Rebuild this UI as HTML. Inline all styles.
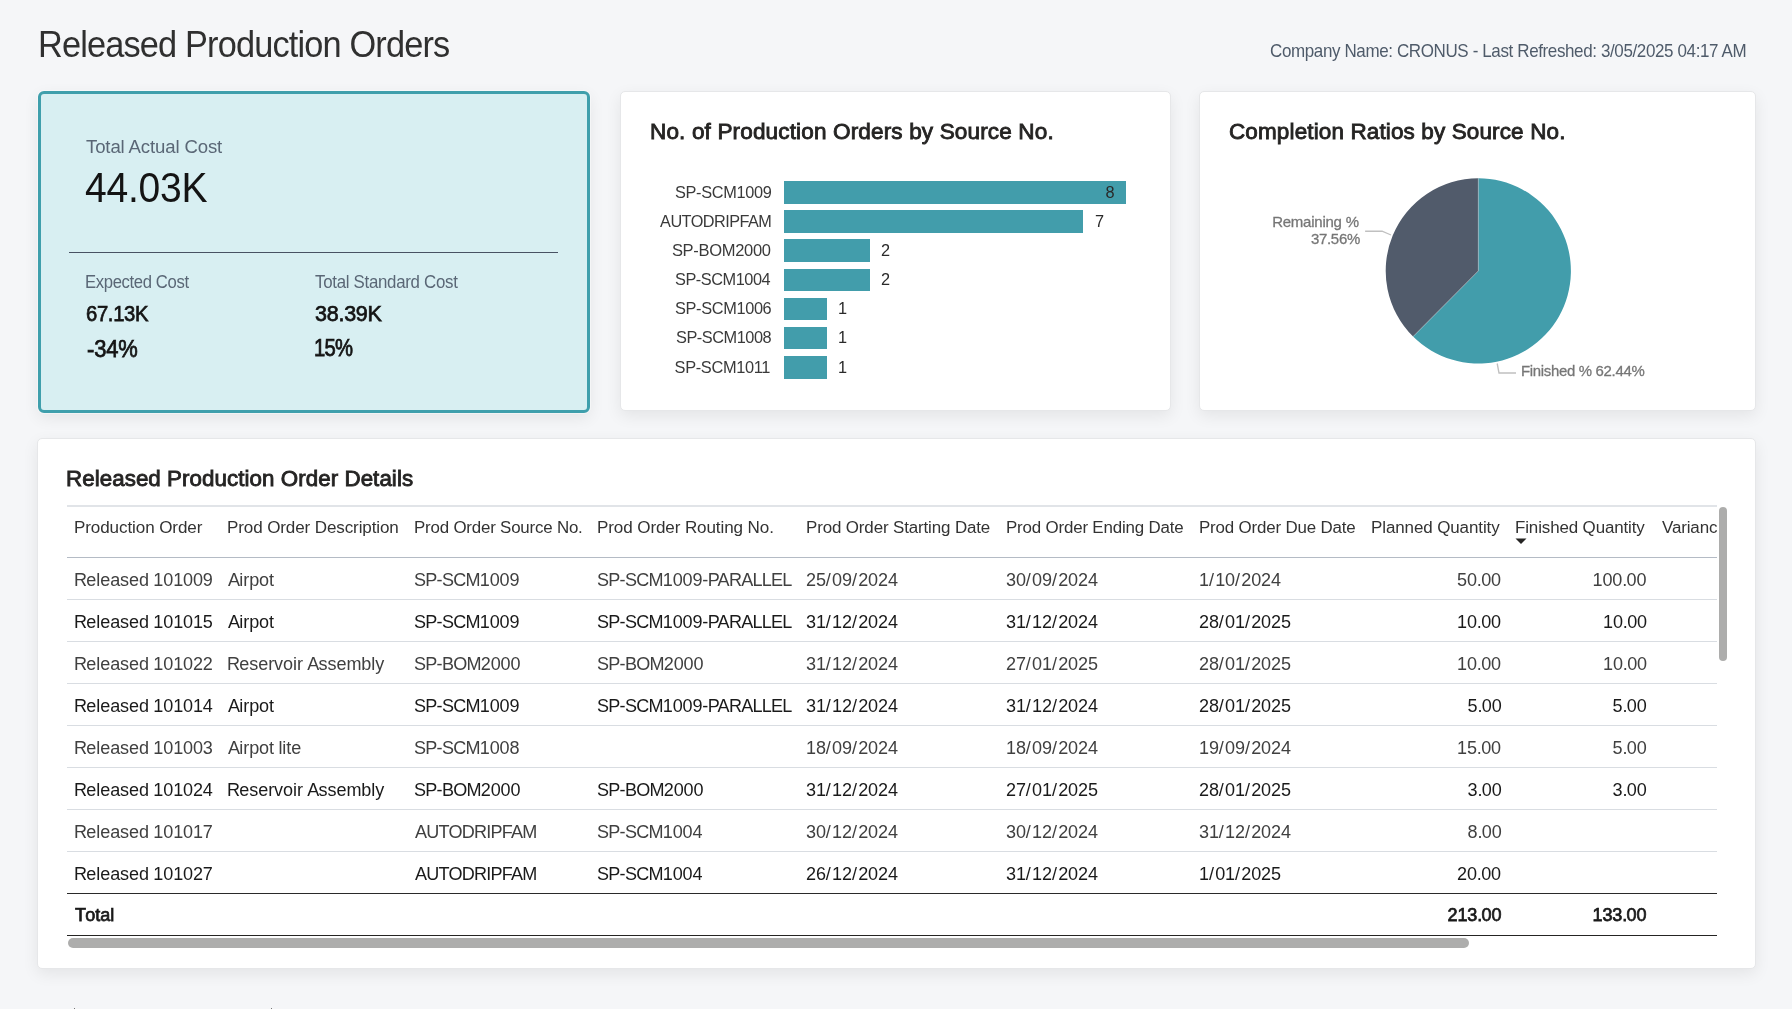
<!DOCTYPE html>
<html><head><meta charset="utf-8"><title>Released Production Orders</title><style>
*{margin:0;padding:0;box-sizing:border-box}
html,body{width:1792px;height:1009px;overflow:hidden;background:#f5f6f8;font-family:"Liberation Sans",sans-serif}
.t{position:absolute;white-space:pre;}
.card{position:absolute;background:#fff;border:1px solid #e6e7e9;border-radius:5px;box-shadow:0 5px 16px rgba(0,0,0,0.075)}
.kpi{position:absolute;background:#d8eff2;border:3px solid #3f9fac;border-radius:6px;box-shadow:0 0 0 1px rgba(255,255,255,0.45),0 5px 16px rgba(0,0,0,0.075)}
</style></head>
<body>
<div class="card" style="left:620px;top:91px;width:551px;height:320px"></div>
<div class="card" style="left:1199px;top:91px;width:557px;height:320px"></div>
<div class="card" style="left:37px;top:438px;width:1719px;height:531px"></div>
<div class="kpi" style="left:38px;top:91px;width:552px;height:322px"></div>
<div style="position:absolute;left:69px;top:251.8px;width:489px;height:1.6px;background:#485263"></div>
<div style="position:absolute;left:784.0px;top:181.10px;width:342.00px;height:22.5px;background:#429dab"></div>
<div style="position:absolute;left:784.0px;top:210.27px;width:299.25px;height:22.5px;background:#429dab"></div>
<div style="position:absolute;left:784.0px;top:239.44px;width:85.50px;height:22.5px;background:#429dab"></div>
<div style="position:absolute;left:784.0px;top:268.61px;width:85.50px;height:22.5px;background:#429dab"></div>
<div style="position:absolute;left:784.0px;top:297.78px;width:42.75px;height:22.5px;background:#429dab"></div>
<div style="position:absolute;left:784.0px;top:326.95px;width:42.75px;height:22.5px;background:#429dab"></div>
<div style="position:absolute;left:784.0px;top:356.12px;width:42.75px;height:22.5px;background:#429dab"></div>
<svg style="position:absolute;left:0;top:0" width="1792" height="1009" viewBox="0 0 1792 1009">
<path d="M1478.3,270.9 L1478.3,178.29999999999998 A92.6,92.6 0 1 1 1413.07,336.62 Z" fill="#429dab"/>
<path d="M1478.3,270.9 L1413.07,336.62 A92.6,92.6 0 0 1 1478.3,178.29999999999998 Z" fill="#515b6b"/>
<path d="M1478.3,178.29999999999998 L1478.3,270.9 L1413.07,336.62" stroke="#ffffff" stroke-opacity="0.35" stroke-width="0.8" fill="none"/>
<polyline points="1365.1,231.2 1382.1,231.2 1391,235" stroke="#c0c0c0" stroke-width="1.35" fill="none"/>
<polyline points="1497.2,363.5 1499,373 1516,373" stroke="#c0c0c0" stroke-width="1.35" fill="none"/>
<path d="M1515.5,538.5 L1526.5,538.5 L1521,544 Z" fill="#252423"/>
</svg>
<div style="position:absolute;left:67px;top:505px;width:1650px;height:2px;background:#e1e4e8"></div>
<div style="position:absolute;left:67px;top:556.6px;width:1650px;height:1.8px;background:#b4bbc5"></div>
<div style="position:absolute;left:67px;top:599px;width:1650px;height:1px;background:#d9dde2"></div>
<div style="position:absolute;left:67px;top:641px;width:1650px;height:1px;background:#d9dde2"></div>
<div style="position:absolute;left:67px;top:683px;width:1650px;height:1px;background:#d9dde2"></div>
<div style="position:absolute;left:67px;top:725px;width:1650px;height:1px;background:#d9dde2"></div>
<div style="position:absolute;left:67px;top:767px;width:1650px;height:1px;background:#d9dde2"></div>
<div style="position:absolute;left:67px;top:809px;width:1650px;height:1px;background:#d9dde2"></div>
<div style="position:absolute;left:67px;top:851px;width:1650px;height:1px;background:#d9dde2"></div>
<div style="position:absolute;left:67px;top:893px;width:1650px;height:1.4px;background:#2a2a2a"></div>
<div style="position:absolute;left:74px;top:1007.5px;width:1.2px;height:2px;background:#777"></div>
<div style="position:absolute;left:271px;top:1007.5px;width:1.2px;height:2px;background:#777"></div>
<div style="position:absolute;left:67px;top:935px;width:1650px;height:1.3px;background:#252423"></div>
<div style="position:absolute;left:68px;top:938.3px;width:1401.4px;height:9.3px;border-radius:5px;background:#adadac"></div>
<div style="position:absolute;left:1719px;top:506.5px;width:8.2px;height:154px;border-radius:4px;background:#adadac"></div>
<div style="position:absolute;left:0;top:0;width:1792px;height:1009px;will-change:transform"><span id="title" class="t" style="top:27.09px;font-size:36.05px;line-height:36.05px;color:#303030;letter-spacing:-0.882px;left:38.30px;transform:scaleX(0.9523);transform-origin:0 50%;">Released Production Orders</span>
<span id="sub" class="t" style="top:42.99px;font-size:17.73px;line-height:17.73px;color:#4f5b6a;letter-spacing:-0.389px;left:1269.90px;transform:scaleX(0.9586);transform-origin:0 50%;">Company Name: CRONUS - Last Refreshed: 3/05/2025 04:17 AM</span>
<span id="k_lbl" class="t" style="top:137.71px;font-size:18.90px;line-height:18.90px;color:#5a6776;letter-spacing:-0.146px;left:86.20px;transform:scaleX(0.9846);transform-origin:0 50%;">Total Actual Cost</span>
<span id="k_val" class="t" style="top:166.25px;font-size:42.59px;line-height:42.59px;color:#141414;letter-spacing:-0.262px;left:84.60px;transform:scaleX(0.9171);transform-origin:0 50%;">44.03K</span>
<span id="k_exp_l" class="t" style="top:274.24px;font-size:17.44px;line-height:17.44px;color:#5a6776;letter-spacing:-0.392px;left:85.40px;transform:scaleX(0.9570);transform-origin:0 50%;">Expected Cost</span>
<span id="k_exp_v" class="t" style="top:302.16px;font-size:22.97px;line-height:22.97px;color:#141414;-webkit-text-stroke:0.75px currentColor;letter-spacing:-0.363px;left:86.40px;transform:scaleX(0.8808);transform-origin:0 50%;">67.13K</span>
<span id="k_exp_p" class="t" style="top:337.61px;font-size:23.26px;line-height:23.26px;color:#141414;-webkit-text-stroke:0.75px currentColor;letter-spacing:-0.141px;left:86.70px;transform:scaleX(0.9432);transform-origin:0 50%;">-34%</span>
<span id="k_std_l" class="t" style="top:273.94px;font-size:17.44px;line-height:17.44px;color:#5a6776;letter-spacing:-0.293px;left:315.20px;transform:scaleX(0.9664);transform-origin:0 50%;">Total Standard Cost</span>
<span id="k_std_v" class="t" style="top:301.96px;font-size:22.97px;line-height:22.97px;color:#141414;-webkit-text-stroke:0.75px currentColor;letter-spacing:-0.257px;left:315.00px;transform:scaleX(0.9357);transform-origin:0 50%;">38.39K</span>
<span id="k_std_p" class="t" style="top:337.01px;font-size:23.26px;line-height:23.26px;color:#141414;-webkit-text-stroke:0.75px currentColor;letter-spacing:-0.804px;left:314.00px;transform:scaleX(0.8710);transform-origin:0 50%;">15%</span>
<span id="bar_t" class="t" style="top:120.98px;font-size:22.24px;line-height:22.24px;color:#252423;-webkit-text-stroke:0.85px currentColor;letter-spacing:0.147px;left:649.80px;transform:scaleX(1.0133);transform-origin:0 50%;">No. of Production Orders by Source No.</span>
<span id="pie_t" class="t" style="top:120.98px;font-size:22.24px;line-height:22.24px;color:#252423;-webkit-text-stroke:0.85px currentColor;letter-spacing:0.135px;left:1228.90px;transform:scaleX(1.0108);transform-origin:0 50%;">Completion Ratios by Source No.</span>
<span id="tab_t" class="t" style="top:467.98px;font-size:22.24px;line-height:22.24px;color:#252423;-webkit-text-stroke:0.85px currentColor;letter-spacing:0.062px;left:66.30px;transform:scaleX(1.0044);transform-origin:0 50%;">Released Production Order Details</span>
<span id="bl0" class="t" style="top:183.50px;font-size:17.01px;line-height:17.01px;color:#3a3a3a;letter-spacing:-0.347px;right:1020.61px;transform:scaleX(0.9604);transform-origin:100% 50%;">SP-SCM1009</span>
<span id="bv0" class="t" style="top:183.50px;font-size:17.01px;line-height:17.01px;color:#2a2a2a;right:677.81px;transform:scaleX(0.9604);transform-origin:100% 50%;">8</span>
<span id="bl1" class="t" style="top:212.67px;font-size:17.01px;line-height:17.01px;color:#3a3a3a;letter-spacing:-0.565px;right:1020.94px;transform:scaleX(0.9561);transform-origin:100% 50%;">AUTODRIPFAM</span>
<span id="bv1" class="t" style="top:212.67px;font-size:17.01px;line-height:17.01px;color:#2a2a2a;left:1094.75px;transform:scaleX(0.9604);transform-origin:0 50%;">7</span>
<span id="bl2" class="t" style="top:241.84px;font-size:17.01px;line-height:17.01px;color:#3a3a3a;letter-spacing:-0.320px;right:1021.29px;transform:scaleX(0.9717);transform-origin:100% 50%;">SP-BOM2000</span>
<span id="bv2" class="t" style="top:241.84px;font-size:17.01px;line-height:17.01px;color:#2a2a2a;left:881.00px;transform:scaleX(0.9604);transform-origin:0 50%;">2</span>
<span id="bl3" class="t" style="top:271.01px;font-size:17.01px;line-height:17.01px;color:#3a3a3a;letter-spacing:-0.475px;right:1021.89px;transform:scaleX(0.9599);transform-origin:100% 50%;">SP-SCM1004</span>
<span id="bv3" class="t" style="top:271.01px;font-size:17.01px;line-height:17.01px;color:#2a2a2a;left:881.00px;transform:scaleX(0.9604);transform-origin:0 50%;">2</span>
<span id="bl4" class="t" style="top:300.18px;font-size:17.01px;line-height:17.01px;color:#3a3a3a;letter-spacing:-0.359px;right:1020.77px;transform:scaleX(0.9599);transform-origin:100% 50%;">SP-SCM1006</span>
<span id="bv4" class="t" style="top:300.18px;font-size:17.01px;line-height:17.01px;color:#2a2a2a;left:838.25px;transform:scaleX(0.9604);transform-origin:0 50%;">1</span>
<span id="bl5" class="t" style="top:329.35px;font-size:17.01px;line-height:17.01px;color:#3a3a3a;letter-spacing:-0.475px;right:1020.89px;transform:scaleX(0.9599);transform-origin:100% 50%;">SP-SCM1008</span>
<span id="bv5" class="t" style="top:329.35px;font-size:17.01px;line-height:17.01px;color:#2a2a2a;left:838.25px;transform:scaleX(0.9604);transform-origin:0 50%;">1</span>
<span id="bl6" class="t" style="top:358.52px;font-size:17.01px;line-height:17.01px;color:#3a3a3a;letter-spacing:-0.369px;right:1021.81px;transform:scaleX(0.9637);transform-origin:100% 50%;">SP-SCM1011</span>
<span id="bv6" class="t" style="top:358.52px;font-size:17.01px;line-height:17.01px;color:#2a2a2a;left:838.25px;transform:scaleX(0.9604);transform-origin:0 50%;">1</span>
<span id="pl_rem" class="t" style="top:213.73px;font-size:15.55px;line-height:15.55px;color:#767676;-webkit-text-stroke:0.3px currentColor;letter-spacing:-0.249px;right:433.04px;transform:scaleX(0.9646);transform-origin:100% 50%;">Remaining %</span>
<span id="pl_rem2" class="t" style="top:230.53px;font-size:15.55px;line-height:15.55px;color:#767676;-webkit-text-stroke:0.3px currentColor;letter-spacing:-0.290px;right:432.49px;transform:scaleX(0.9629);transform-origin:100% 50%;">37.56%</span>
<span id="pl_fin" class="t" style="top:363.23px;font-size:15.55px;line-height:15.55px;color:#767676;-webkit-text-stroke:0.3px currentColor;letter-spacing:-0.332px;left:1521.30px;transform:scaleX(0.9613);transform-origin:0 50%;">Finished % 62.44%</span>
<span id="h0" class="t" style="top:518.96px;font-size:17.30px;line-height:17.30px;color:#333333;letter-spacing:-0.101px;left:73.50px;transform:scaleX(0.9866);transform-origin:0 50%;">Production Order</span>
<span id="h1" class="t" style="top:518.96px;font-size:17.30px;line-height:17.30px;color:#333333;letter-spacing:-0.125px;left:227.30px;transform:scaleX(0.9868);transform-origin:0 50%;">Prod Order Description</span>
<span id="h2" class="t" style="top:518.96px;font-size:17.30px;line-height:17.30px;color:#333333;letter-spacing:-0.200px;left:413.50px;transform:scaleX(0.9772);transform-origin:0 50%;">Prod Order Source No.</span>
<span id="h3" class="t" style="top:518.96px;font-size:17.30px;line-height:17.30px;color:#333333;letter-spacing:-0.116px;left:597.00px;transform:scaleX(0.9876);transform-origin:0 50%;">Prod Order Routing No.</span>
<span id="h4" class="t" style="top:518.96px;font-size:17.30px;line-height:17.30px;color:#333333;letter-spacing:-0.142px;left:805.60px;transform:scaleX(0.9809);transform-origin:0 50%;">Prod Order Starting Date</span>
<span id="h5" class="t" style="top:518.96px;font-size:17.30px;line-height:17.30px;color:#333333;letter-spacing:-0.185px;left:1006.00px;transform:scaleX(0.9786);transform-origin:0 50%;">Prod Order Ending Date</span>
<span id="h6" class="t" style="top:518.96px;font-size:17.30px;line-height:17.30px;color:#333333;letter-spacing:-0.170px;left:1199.10px;transform:scaleX(0.9782);transform-origin:0 50%;">Prod Order Due Date</span>
<span id="h7" class="t" style="top:518.96px;font-size:17.30px;line-height:17.30px;color:#333333;letter-spacing:-0.109px;left:1371.00px;transform:scaleX(0.9824);transform-origin:0 50%;">Planned Quantity</span>
<span id="h8" class="t" style="top:518.96px;font-size:17.30px;line-height:17.30px;color:#333333;letter-spacing:-0.134px;left:1515.30px;transform:scaleX(0.9808);transform-origin:0 50%;">Finished Quantity</span>
<span id="r0c0" class="t" style="top:570.81px;font-size:18.90px;line-height:18.90px;color:#404040;letter-spacing:-0.687px;left:73.50px;transform:scaleX(0.9550);transform-origin:0 50%;"><span style="letter-spacing:-0.793px">R</span><span style="letter-spacing:-0.072px">eleased</span> <span style="letter-spacing:-0.149px">101009</span></span>
<span id="r0c1" class="t" style="top:570.81px;font-size:18.90px;line-height:18.90px;color:#404040;letter-spacing:-0.687px;left:228.30px;transform:scaleX(0.9550);transform-origin:0 50%;"><span style="letter-spacing:-0.793px">A</span><span style="letter-spacing:-0.072px">irpot</span></span>
<span id="r0c2" class="t" style="top:570.81px;font-size:18.90px;line-height:18.90px;color:#404040;letter-spacing:-0.687px;left:413.50px;transform:scaleX(0.9550);transform-origin:0 50%;"><span style="letter-spacing:-0.793px">SP</span>-<span style="letter-spacing:-0.793px">SCM</span><span style="letter-spacing:-0.149px">1009</span></span>
<span id="r0c3" class="t" style="top:570.81px;font-size:18.90px;line-height:18.90px;color:#404040;letter-spacing:-0.687px;left:597.00px;transform:scaleX(0.9550);transform-origin:0 50%;"><span style="letter-spacing:-0.793px">SP</span>-<span style="letter-spacing:-0.793px">SCM</span><span style="letter-spacing:-0.149px">1009</span>-<span style="letter-spacing:-0.793px">PARALLEL</span></span>
<span id="r0c4" class="t" style="top:570.81px;font-size:18.90px;line-height:18.90px;color:#404040;letter-spacing:-0.687px;left:805.60px;transform:scaleX(0.9550);transform-origin:0 50%;"><span style="letter-spacing:-0.149px">25</span><span style="letter-spacing:1.366px">/</span><span style="letter-spacing:-0.149px">09</span><span style="letter-spacing:1.366px">/</span><span style="letter-spacing:-0.149px">2024</span></span>
<span id="r0c5" class="t" style="top:570.81px;font-size:18.90px;line-height:18.90px;color:#404040;letter-spacing:-0.687px;left:1006.00px;transform:scaleX(0.9550);transform-origin:0 50%;"><span style="letter-spacing:-0.149px">30</span><span style="letter-spacing:1.366px">/</span><span style="letter-spacing:-0.149px">09</span><span style="letter-spacing:1.366px">/</span><span style="letter-spacing:-0.149px">2024</span></span>
<span id="r0c6" class="t" style="top:570.81px;font-size:18.90px;line-height:18.90px;color:#404040;letter-spacing:-0.687px;left:1199.10px;transform:scaleX(0.9550);transform-origin:0 50%;"><span style="letter-spacing:-0.149px">1</span><span style="letter-spacing:1.366px">/</span><span style="letter-spacing:-0.149px">10</span><span style="letter-spacing:1.366px">/</span><span style="letter-spacing:-0.149px">2024</span></span>
<span id="r0c7" class="t" style="top:570.81px;font-size:18.90px;line-height:18.90px;color:#404040;letter-spacing:-0.687px;right:290.57px;transform:scaleX(0.9550);transform-origin:100% 50%;"><span style="letter-spacing:-0.149px">50</span>.<span style="letter-spacing:-0.149px">00</span></span>
<span id="r0c8" class="t" style="top:570.81px;font-size:18.90px;line-height:18.90px;color:#404040;letter-spacing:-0.687px;right:145.38px;transform:scaleX(0.9550);transform-origin:100% 50%;"><span style="letter-spacing:-0.149px">100</span>.<span style="letter-spacing:-0.149px">00</span></span>
<span id="r1c0" class="t" style="top:612.81px;font-size:18.90px;line-height:18.90px;color:#1a1a1a;letter-spacing:-0.687px;left:73.50px;transform:scaleX(0.9550);transform-origin:0 50%;"><span style="letter-spacing:-0.793px">R</span><span style="letter-spacing:-0.072px">eleased</span> <span style="letter-spacing:-0.149px">101015</span></span>
<span id="r1c1" class="t" style="top:612.81px;font-size:18.90px;line-height:18.90px;color:#1a1a1a;letter-spacing:-0.687px;left:228.30px;transform:scaleX(0.9550);transform-origin:0 50%;"><span style="letter-spacing:-0.793px">A</span><span style="letter-spacing:-0.072px">irpot</span></span>
<span id="r1c2" class="t" style="top:612.81px;font-size:18.90px;line-height:18.90px;color:#1a1a1a;letter-spacing:-0.687px;left:413.50px;transform:scaleX(0.9550);transform-origin:0 50%;"><span style="letter-spacing:-0.793px">SP</span>-<span style="letter-spacing:-0.793px">SCM</span><span style="letter-spacing:-0.149px">1009</span></span>
<span id="r1c3" class="t" style="top:612.81px;font-size:18.90px;line-height:18.90px;color:#1a1a1a;letter-spacing:-0.687px;left:597.00px;transform:scaleX(0.9550);transform-origin:0 50%;"><span style="letter-spacing:-0.793px">SP</span>-<span style="letter-spacing:-0.793px">SCM</span><span style="letter-spacing:-0.149px">1009</span>-<span style="letter-spacing:-0.793px">PARALLEL</span></span>
<span id="r1c4" class="t" style="top:612.81px;font-size:18.90px;line-height:18.90px;color:#1a1a1a;letter-spacing:-0.687px;left:805.60px;transform:scaleX(0.9550);transform-origin:0 50%;"><span style="letter-spacing:-0.149px">31</span><span style="letter-spacing:1.366px">/</span><span style="letter-spacing:-0.149px">12</span><span style="letter-spacing:1.366px">/</span><span style="letter-spacing:-0.149px">2024</span></span>
<span id="r1c5" class="t" style="top:612.81px;font-size:18.90px;line-height:18.90px;color:#1a1a1a;letter-spacing:-0.687px;left:1006.00px;transform:scaleX(0.9550);transform-origin:0 50%;"><span style="letter-spacing:-0.149px">31</span><span style="letter-spacing:1.366px">/</span><span style="letter-spacing:-0.149px">12</span><span style="letter-spacing:1.366px">/</span><span style="letter-spacing:-0.149px">2024</span></span>
<span id="r1c6" class="t" style="top:612.81px;font-size:18.90px;line-height:18.90px;color:#1a1a1a;letter-spacing:-0.687px;left:1199.10px;transform:scaleX(0.9550);transform-origin:0 50%;"><span style="letter-spacing:-0.149px">28</span><span style="letter-spacing:1.366px">/</span><span style="letter-spacing:-0.149px">01</span><span style="letter-spacing:1.366px">/</span><span style="letter-spacing:-0.149px">2025</span></span>
<span id="r1c7" class="t" style="top:612.81px;font-size:18.90px;line-height:18.90px;color:#1a1a1a;letter-spacing:-0.687px;right:290.67px;transform:scaleX(0.9550);transform-origin:100% 50%;"><span style="letter-spacing:-0.149px">10</span>.<span style="letter-spacing:-0.149px">00</span></span>
<span id="r1c8" class="t" style="top:612.81px;font-size:18.90px;line-height:18.90px;color:#1a1a1a;letter-spacing:-0.687px;right:145.27px;transform:scaleX(0.9550);transform-origin:100% 50%;"><span style="letter-spacing:-0.149px">10</span>.<span style="letter-spacing:-0.149px">00</span></span>
<span id="r2c0" class="t" style="top:654.81px;font-size:18.90px;line-height:18.90px;color:#404040;letter-spacing:-0.687px;left:73.50px;transform:scaleX(0.9550);transform-origin:0 50%;"><span style="letter-spacing:-0.793px">R</span><span style="letter-spacing:-0.072px">eleased</span> <span style="letter-spacing:-0.149px">101022</span></span>
<span id="r2c1" class="t" style="top:654.81px;font-size:18.90px;line-height:18.90px;color:#404040;letter-spacing:-0.687px;left:226.90px;transform:scaleX(0.9550);transform-origin:0 50%;"><span style="letter-spacing:-0.793px">R</span><span style="letter-spacing:-0.072px">eservoir</span> <span style="letter-spacing:-0.793px">A</span><span style="letter-spacing:-0.072px">ssembly</span></span>
<span id="r2c2" class="t" style="top:654.81px;font-size:18.90px;line-height:18.90px;color:#404040;letter-spacing:-0.687px;left:413.50px;transform:scaleX(0.9550);transform-origin:0 50%;"><span style="letter-spacing:-0.793px">SP</span>-<span style="letter-spacing:-0.793px">BOM</span><span style="letter-spacing:-0.149px">2000</span></span>
<span id="r2c3" class="t" style="top:654.81px;font-size:18.90px;line-height:18.90px;color:#404040;letter-spacing:-0.687px;left:597.00px;transform:scaleX(0.9550);transform-origin:0 50%;"><span style="letter-spacing:-0.793px">SP</span>-<span style="letter-spacing:-0.793px">BOM</span><span style="letter-spacing:-0.149px">2000</span></span>
<span id="r2c4" class="t" style="top:654.81px;font-size:18.90px;line-height:18.90px;color:#404040;letter-spacing:-0.687px;left:805.60px;transform:scaleX(0.9550);transform-origin:0 50%;"><span style="letter-spacing:-0.149px">31</span><span style="letter-spacing:1.366px">/</span><span style="letter-spacing:-0.149px">12</span><span style="letter-spacing:1.366px">/</span><span style="letter-spacing:-0.149px">2024</span></span>
<span id="r2c5" class="t" style="top:654.81px;font-size:18.90px;line-height:18.90px;color:#404040;letter-spacing:-0.687px;left:1006.00px;transform:scaleX(0.9550);transform-origin:0 50%;"><span style="letter-spacing:-0.149px">27</span><span style="letter-spacing:1.366px">/</span><span style="letter-spacing:-0.149px">01</span><span style="letter-spacing:1.366px">/</span><span style="letter-spacing:-0.149px">2025</span></span>
<span id="r2c6" class="t" style="top:654.81px;font-size:18.90px;line-height:18.90px;color:#404040;letter-spacing:-0.687px;left:1199.10px;transform:scaleX(0.9550);transform-origin:0 50%;"><span style="letter-spacing:-0.149px">28</span><span style="letter-spacing:1.366px">/</span><span style="letter-spacing:-0.149px">01</span><span style="letter-spacing:1.366px">/</span><span style="letter-spacing:-0.149px">2025</span></span>
<span id="r2c7" class="t" style="top:654.81px;font-size:18.90px;line-height:18.90px;color:#404040;letter-spacing:-0.687px;right:290.57px;transform:scaleX(0.9550);transform-origin:100% 50%;"><span style="letter-spacing:-0.149px">10</span>.<span style="letter-spacing:-0.149px">00</span></span>
<span id="r2c8" class="t" style="top:654.81px;font-size:18.90px;line-height:18.90px;color:#404040;letter-spacing:-0.687px;right:145.27px;transform:scaleX(0.9550);transform-origin:100% 50%;"><span style="letter-spacing:-0.149px">10</span>.<span style="letter-spacing:-0.149px">00</span></span>
<span id="r3c0" class="t" style="top:696.81px;font-size:18.90px;line-height:18.90px;color:#1a1a1a;letter-spacing:-0.687px;left:73.50px;transform:scaleX(0.9550);transform-origin:0 50%;"><span style="letter-spacing:-0.793px">R</span><span style="letter-spacing:-0.072px">eleased</span> <span style="letter-spacing:-0.149px">101014</span></span>
<span id="r3c1" class="t" style="top:696.81px;font-size:18.90px;line-height:18.90px;color:#1a1a1a;letter-spacing:-0.687px;left:228.30px;transform:scaleX(0.9550);transform-origin:0 50%;"><span style="letter-spacing:-0.793px">A</span><span style="letter-spacing:-0.072px">irpot</span></span>
<span id="r3c2" class="t" style="top:696.81px;font-size:18.90px;line-height:18.90px;color:#1a1a1a;letter-spacing:-0.687px;left:413.50px;transform:scaleX(0.9550);transform-origin:0 50%;"><span style="letter-spacing:-0.793px">SP</span>-<span style="letter-spacing:-0.793px">SCM</span><span style="letter-spacing:-0.149px">1009</span></span>
<span id="r3c3" class="t" style="top:696.81px;font-size:18.90px;line-height:18.90px;color:#1a1a1a;letter-spacing:-0.687px;left:597.00px;transform:scaleX(0.9550);transform-origin:0 50%;"><span style="letter-spacing:-0.793px">SP</span>-<span style="letter-spacing:-0.793px">SCM</span><span style="letter-spacing:-0.149px">1009</span>-<span style="letter-spacing:-0.793px">PARALLEL</span></span>
<span id="r3c4" class="t" style="top:696.81px;font-size:18.90px;line-height:18.90px;color:#1a1a1a;letter-spacing:-0.687px;left:805.60px;transform:scaleX(0.9550);transform-origin:0 50%;"><span style="letter-spacing:-0.149px">31</span><span style="letter-spacing:1.366px">/</span><span style="letter-spacing:-0.149px">12</span><span style="letter-spacing:1.366px">/</span><span style="letter-spacing:-0.149px">2024</span></span>
<span id="r3c5" class="t" style="top:696.81px;font-size:18.90px;line-height:18.90px;color:#1a1a1a;letter-spacing:-0.687px;left:1006.00px;transform:scaleX(0.9550);transform-origin:0 50%;"><span style="letter-spacing:-0.149px">31</span><span style="letter-spacing:1.366px">/</span><span style="letter-spacing:-0.149px">12</span><span style="letter-spacing:1.366px">/</span><span style="letter-spacing:-0.149px">2024</span></span>
<span id="r3c6" class="t" style="top:696.81px;font-size:18.90px;line-height:18.90px;color:#1a1a1a;letter-spacing:-0.687px;left:1199.10px;transform:scaleX(0.9550);transform-origin:0 50%;"><span style="letter-spacing:-0.149px">28</span><span style="letter-spacing:1.366px">/</span><span style="letter-spacing:-0.149px">01</span><span style="letter-spacing:1.366px">/</span><span style="letter-spacing:-0.149px">2025</span></span>
<span id="r3c7" class="t" style="top:696.81px;font-size:18.90px;line-height:18.90px;color:#1a1a1a;letter-spacing:-0.687px;right:290.46px;transform:scaleX(0.9550);transform-origin:100% 50%;"><span style="letter-spacing:-0.149px">5</span>.<span style="letter-spacing:-0.149px">00</span></span>
<span id="r3c8" class="t" style="top:696.81px;font-size:18.90px;line-height:18.90px;color:#1a1a1a;letter-spacing:-0.687px;right:145.16px;transform:scaleX(0.9550);transform-origin:100% 50%;"><span style="letter-spacing:-0.149px">5</span>.<span style="letter-spacing:-0.149px">00</span></span>
<span id="r4c0" class="t" style="top:738.81px;font-size:18.90px;line-height:18.90px;color:#404040;letter-spacing:-0.687px;left:73.50px;transform:scaleX(0.9550);transform-origin:0 50%;"><span style="letter-spacing:-0.793px">R</span><span style="letter-spacing:-0.072px">eleased</span> <span style="letter-spacing:-0.149px">101003</span></span>
<span id="r4c1" class="t" style="top:738.81px;font-size:18.90px;line-height:18.90px;color:#404040;letter-spacing:-0.687px;left:228.30px;transform:scaleX(0.9550);transform-origin:0 50%;"><span style="letter-spacing:-0.793px">A</span><span style="letter-spacing:-0.072px">irpot</span> <span style="letter-spacing:-0.072px">lite</span></span>
<span id="r4c2" class="t" style="top:738.81px;font-size:18.90px;line-height:18.90px;color:#404040;letter-spacing:-0.687px;left:413.50px;transform:scaleX(0.9550);transform-origin:0 50%;"><span style="letter-spacing:-0.793px">SP</span>-<span style="letter-spacing:-0.793px">SCM</span><span style="letter-spacing:-0.149px">1008</span></span>
<span id="r4c4" class="t" style="top:738.81px;font-size:18.90px;line-height:18.90px;color:#404040;letter-spacing:-0.687px;left:805.60px;transform:scaleX(0.9550);transform-origin:0 50%;"><span style="letter-spacing:-0.149px">18</span><span style="letter-spacing:1.366px">/</span><span style="letter-spacing:-0.149px">09</span><span style="letter-spacing:1.366px">/</span><span style="letter-spacing:-0.149px">2024</span></span>
<span id="r4c5" class="t" style="top:738.81px;font-size:18.90px;line-height:18.90px;color:#404040;letter-spacing:-0.687px;left:1006.00px;transform:scaleX(0.9550);transform-origin:0 50%;"><span style="letter-spacing:-0.149px">18</span><span style="letter-spacing:1.366px">/</span><span style="letter-spacing:-0.149px">09</span><span style="letter-spacing:1.366px">/</span><span style="letter-spacing:-0.149px">2024</span></span>
<span id="r4c6" class="t" style="top:738.81px;font-size:18.90px;line-height:18.90px;color:#404040;letter-spacing:-0.687px;left:1199.10px;transform:scaleX(0.9550);transform-origin:0 50%;"><span style="letter-spacing:-0.149px">19</span><span style="letter-spacing:1.366px">/</span><span style="letter-spacing:-0.149px">09</span><span style="letter-spacing:1.366px">/</span><span style="letter-spacing:-0.149px">2024</span></span>
<span id="r4c7" class="t" style="top:738.81px;font-size:18.90px;line-height:18.90px;color:#404040;letter-spacing:-0.687px;right:290.57px;transform:scaleX(0.9550);transform-origin:100% 50%;"><span style="letter-spacing:-0.149px">15</span>.<span style="letter-spacing:-0.149px">00</span></span>
<span id="r4c8" class="t" style="top:738.81px;font-size:18.90px;line-height:18.90px;color:#404040;letter-spacing:-0.687px;right:145.16px;transform:scaleX(0.9550);transform-origin:100% 50%;"><span style="letter-spacing:-0.149px">5</span>.<span style="letter-spacing:-0.149px">00</span></span>
<span id="r5c0" class="t" style="top:780.81px;font-size:18.90px;line-height:18.90px;color:#1a1a1a;letter-spacing:-0.687px;left:73.50px;transform:scaleX(0.9550);transform-origin:0 50%;"><span style="letter-spacing:-0.793px">R</span><span style="letter-spacing:-0.072px">eleased</span> <span style="letter-spacing:-0.149px">101024</span></span>
<span id="r5c1" class="t" style="top:780.81px;font-size:18.90px;line-height:18.90px;color:#1a1a1a;letter-spacing:-0.687px;left:227.30px;transform:scaleX(0.9550);transform-origin:0 50%;"><span style="letter-spacing:-0.793px">R</span><span style="letter-spacing:-0.072px">eservoir</span> <span style="letter-spacing:-0.793px">A</span><span style="letter-spacing:-0.072px">ssembly</span></span>
<span id="r5c2" class="t" style="top:780.81px;font-size:18.90px;line-height:18.90px;color:#1a1a1a;letter-spacing:-0.687px;left:413.50px;transform:scaleX(0.9550);transform-origin:0 50%;"><span style="letter-spacing:-0.793px">SP</span>-<span style="letter-spacing:-0.793px">BOM</span><span style="letter-spacing:-0.149px">2000</span></span>
<span id="r5c3" class="t" style="top:780.81px;font-size:18.90px;line-height:18.90px;color:#1a1a1a;letter-spacing:-0.687px;left:597.00px;transform:scaleX(0.9550);transform-origin:0 50%;"><span style="letter-spacing:-0.793px">SP</span>-<span style="letter-spacing:-0.793px">BOM</span><span style="letter-spacing:-0.149px">2000</span></span>
<span id="r5c4" class="t" style="top:780.81px;font-size:18.90px;line-height:18.90px;color:#1a1a1a;letter-spacing:-0.687px;left:805.60px;transform:scaleX(0.9550);transform-origin:0 50%;"><span style="letter-spacing:-0.149px">31</span><span style="letter-spacing:1.366px">/</span><span style="letter-spacing:-0.149px">12</span><span style="letter-spacing:1.366px">/</span><span style="letter-spacing:-0.149px">2024</span></span>
<span id="r5c5" class="t" style="top:780.81px;font-size:18.90px;line-height:18.90px;color:#1a1a1a;letter-spacing:-0.687px;left:1006.00px;transform:scaleX(0.9550);transform-origin:0 50%;"><span style="letter-spacing:-0.149px">27</span><span style="letter-spacing:1.366px">/</span><span style="letter-spacing:-0.149px">01</span><span style="letter-spacing:1.366px">/</span><span style="letter-spacing:-0.149px">2025</span></span>
<span id="r5c6" class="t" style="top:780.81px;font-size:18.90px;line-height:18.90px;color:#1a1a1a;letter-spacing:-0.687px;left:1199.10px;transform:scaleX(0.9550);transform-origin:0 50%;"><span style="letter-spacing:-0.149px">28</span><span style="letter-spacing:1.366px">/</span><span style="letter-spacing:-0.149px">01</span><span style="letter-spacing:1.366px">/</span><span style="letter-spacing:-0.149px">2025</span></span>
<span id="r5c7" class="t" style="top:780.81px;font-size:18.90px;line-height:18.90px;color:#1a1a1a;letter-spacing:-0.687px;right:290.46px;transform:scaleX(0.9550);transform-origin:100% 50%;"><span style="letter-spacing:-0.149px">3</span>.<span style="letter-spacing:-0.149px">00</span></span>
<span id="r5c8" class="t" style="top:780.81px;font-size:18.90px;line-height:18.90px;color:#1a1a1a;letter-spacing:-0.687px;right:145.16px;transform:scaleX(0.9550);transform-origin:100% 50%;"><span style="letter-spacing:-0.149px">3</span>.<span style="letter-spacing:-0.149px">00</span></span>
<span id="r6c0" class="t" style="top:822.81px;font-size:18.90px;line-height:18.90px;color:#404040;letter-spacing:-0.687px;left:73.50px;transform:scaleX(0.9550);transform-origin:0 50%;"><span style="letter-spacing:-0.793px">R</span><span style="letter-spacing:-0.072px">eleased</span> <span style="letter-spacing:-0.149px">101017</span></span>
<span id="r6c2" class="t" style="top:822.81px;font-size:18.90px;line-height:18.90px;color:#404040;letter-spacing:-0.687px;left:414.50px;transform:scaleX(0.9550);transform-origin:0 50%;"><span style="letter-spacing:-0.793px">AUTODRIPFAM</span></span>
<span id="r6c3" class="t" style="top:822.81px;font-size:18.90px;line-height:18.90px;color:#404040;letter-spacing:-0.687px;left:597.00px;transform:scaleX(0.9550);transform-origin:0 50%;"><span style="letter-spacing:-0.793px">SP</span>-<span style="letter-spacing:-0.793px">SCM</span><span style="letter-spacing:-0.149px">1004</span></span>
<span id="r6c4" class="t" style="top:822.81px;font-size:18.90px;line-height:18.90px;color:#404040;letter-spacing:-0.687px;left:805.60px;transform:scaleX(0.9550);transform-origin:0 50%;"><span style="letter-spacing:-0.149px">30</span><span style="letter-spacing:1.366px">/</span><span style="letter-spacing:-0.149px">12</span><span style="letter-spacing:1.366px">/</span><span style="letter-spacing:-0.149px">2024</span></span>
<span id="r6c5" class="t" style="top:822.81px;font-size:18.90px;line-height:18.90px;color:#404040;letter-spacing:-0.687px;left:1006.00px;transform:scaleX(0.9550);transform-origin:0 50%;"><span style="letter-spacing:-0.149px">30</span><span style="letter-spacing:1.366px">/</span><span style="letter-spacing:-0.149px">12</span><span style="letter-spacing:1.366px">/</span><span style="letter-spacing:-0.149px">2024</span></span>
<span id="r6c6" class="t" style="top:822.81px;font-size:18.90px;line-height:18.90px;color:#404040;letter-spacing:-0.687px;left:1199.10px;transform:scaleX(0.9550);transform-origin:0 50%;"><span style="letter-spacing:-0.149px">31</span><span style="letter-spacing:1.366px">/</span><span style="letter-spacing:-0.149px">12</span><span style="letter-spacing:1.366px">/</span><span style="letter-spacing:-0.149px">2024</span></span>
<span id="r6c7" class="t" style="top:822.81px;font-size:18.90px;line-height:18.90px;color:#404040;letter-spacing:-0.687px;right:290.46px;transform:scaleX(0.9550);transform-origin:100% 50%;"><span style="letter-spacing:-0.149px">8</span>.<span style="letter-spacing:-0.149px">00</span></span>
<span id="r7c0" class="t" style="top:864.81px;font-size:18.90px;line-height:18.90px;color:#1a1a1a;letter-spacing:-0.687px;left:73.50px;transform:scaleX(0.9550);transform-origin:0 50%;"><span style="letter-spacing:-0.793px">R</span><span style="letter-spacing:-0.072px">eleased</span> <span style="letter-spacing:-0.149px">101027</span></span>
<span id="r7c2" class="t" style="top:864.81px;font-size:18.90px;line-height:18.90px;color:#1a1a1a;letter-spacing:-0.687px;left:414.50px;transform:scaleX(0.9550);transform-origin:0 50%;"><span style="letter-spacing:-0.793px">AUTODRIPFAM</span></span>
<span id="r7c3" class="t" style="top:864.81px;font-size:18.90px;line-height:18.90px;color:#1a1a1a;letter-spacing:-0.687px;left:597.00px;transform:scaleX(0.9550);transform-origin:0 50%;"><span style="letter-spacing:-0.793px">SP</span>-<span style="letter-spacing:-0.793px">SCM</span><span style="letter-spacing:-0.149px">1004</span></span>
<span id="r7c4" class="t" style="top:864.81px;font-size:18.90px;line-height:18.90px;color:#1a1a1a;letter-spacing:-0.687px;left:805.60px;transform:scaleX(0.9550);transform-origin:0 50%;"><span style="letter-spacing:-0.149px">26</span><span style="letter-spacing:1.366px">/</span><span style="letter-spacing:-0.149px">12</span><span style="letter-spacing:1.366px">/</span><span style="letter-spacing:-0.149px">2024</span></span>
<span id="r7c5" class="t" style="top:864.81px;font-size:18.90px;line-height:18.90px;color:#1a1a1a;letter-spacing:-0.687px;left:1006.00px;transform:scaleX(0.9550);transform-origin:0 50%;"><span style="letter-spacing:-0.149px">31</span><span style="letter-spacing:1.366px">/</span><span style="letter-spacing:-0.149px">12</span><span style="letter-spacing:1.366px">/</span><span style="letter-spacing:-0.149px">2024</span></span>
<span id="r7c6" class="t" style="top:864.81px;font-size:18.90px;line-height:18.90px;color:#1a1a1a;letter-spacing:-0.687px;left:1199.10px;transform:scaleX(0.9550);transform-origin:0 50%;"><span style="letter-spacing:-0.149px">1</span><span style="letter-spacing:1.366px">/</span><span style="letter-spacing:-0.149px">01</span><span style="letter-spacing:1.366px">/</span><span style="letter-spacing:-0.149px">2025</span></span>
<span id="r7c7" class="t" style="top:864.81px;font-size:18.90px;line-height:18.90px;color:#1a1a1a;letter-spacing:-0.687px;right:290.57px;transform:scaleX(0.9550);transform-origin:100% 50%;"><span style="letter-spacing:-0.149px">20</span>.<span style="letter-spacing:-0.149px">00</span></span>
<span id="tot" class="t" style="top:906.21px;font-size:18.90px;line-height:18.90px;color:#1a1a1a;-webkit-text-stroke:0.75px currentColor;letter-spacing:-0.687px;left:74.50px;transform:scaleX(0.9550);transform-origin:0 50%;"><span style="letter-spacing:-0.793px">T</span><span style="letter-spacing:-0.072px">otal</span></span>
<span id="tot7" class="t" style="top:906.21px;font-size:18.90px;line-height:18.90px;color:#1a1a1a;-webkit-text-stroke:0.75px currentColor;letter-spacing:-0.687px;right:290.68px;transform:scaleX(0.9550);transform-origin:100% 50%;"><span style="letter-spacing:-0.149px">213</span>.<span style="letter-spacing:-0.149px">00</span></span>
<span id="tot8" class="t" style="top:906.21px;font-size:18.90px;line-height:18.90px;color:#1a1a1a;-webkit-text-stroke:0.75px currentColor;letter-spacing:-0.687px;right:145.38px;transform:scaleX(0.9550);transform-origin:100% 50%;"><span style="letter-spacing:-0.149px">133</span>.<span style="letter-spacing:-0.149px">00</span></span></div>
<div style="position:absolute;left:0;top:0;width:1717px;height:1009px;overflow:hidden;will-change:transform"><span id="h9" class="t" style="top:518.96px;font-size:17.30px;line-height:17.30px;color:#333333;letter-spacing:-0.142px;left:1661.80px;transform:scaleX(0.9821);transform-origin:0 50%;">Variance</span></div>
</body></html>
